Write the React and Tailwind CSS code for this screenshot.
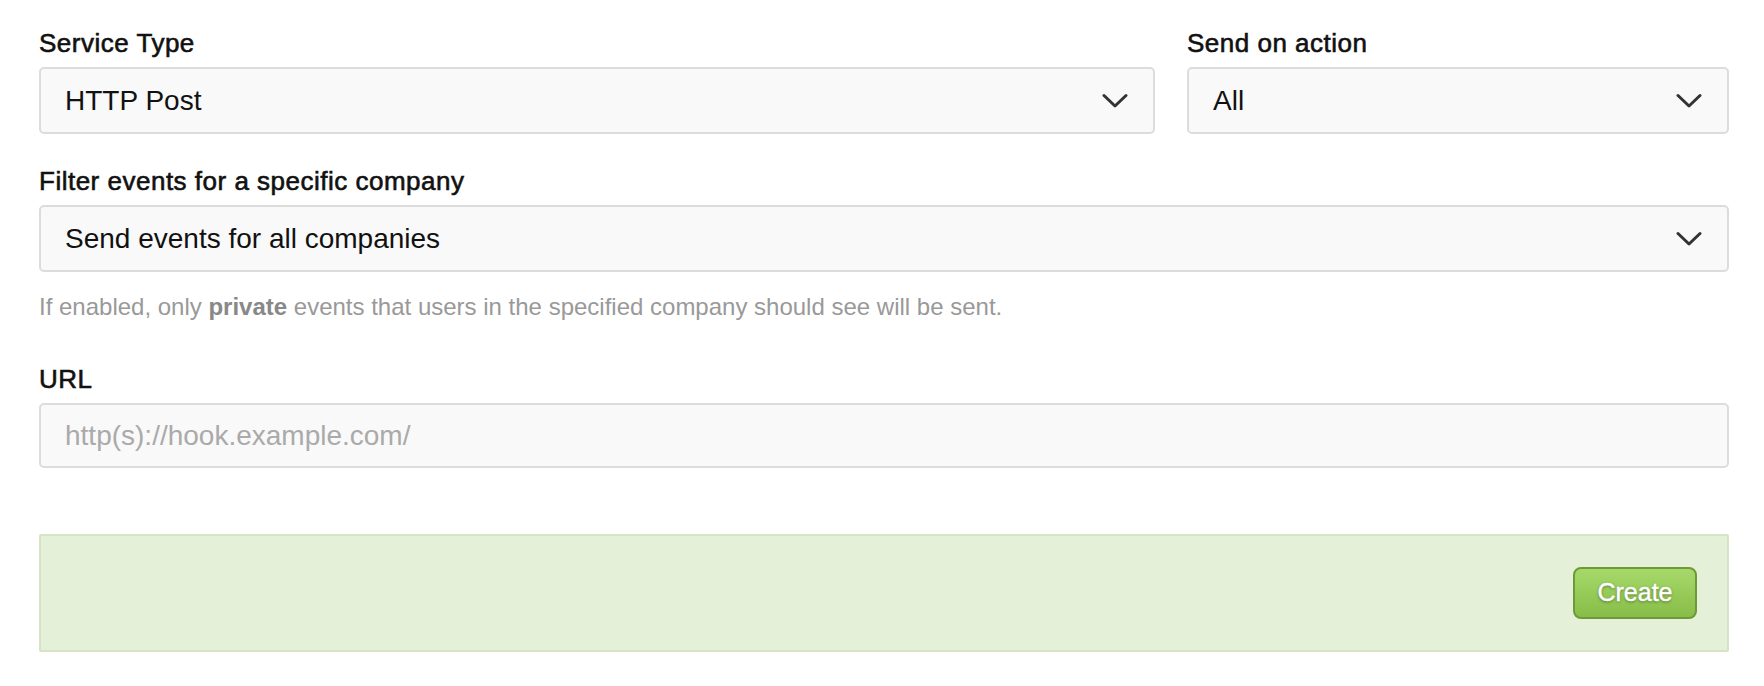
const font = { fontFamily: '"Liberation Sans", Arial, sans-serif' };

function Label({ children }) {
  return (
    <label className="block text-[26px] tracking-[0.5px] leading-[28px] text-[#111] mb-[10px] [-webkit-text-stroke:0.6px_#111]">
      {children}
    </label>
  );
}

function Select({ value }) {
  return (
    <div className="flex h-[67px] items-center justify-between rounded-[5px] border-2 border-[#dcdcdc] bg-[#f9f9f9] pl-[24px] pr-[25px]">
      <span className="text-[28px] text-[#111]">{value}</span>
      <svg width="26" height="16" viewBox="0 0 26 16" fill="none">
        <path d="M2 2.5 L13 13 L24 2.5" stroke="#333" strokeWidth="3" strokeLinecap="round" strokeLinejoin="round" />
      </svg>
    </div>
  );
}

export default function App() {
  return (
    <div className="bg-white min-h-[686px] px-[39px] pr-[35px] pt-[29px]" style={font}>
      <div className="flex gap-[32px]">
        <div className="w-[1116px]">
          <Label>Service Type</Label>
          <Select value="HTTP Post" />
        </div>
        <div className="flex-1">
          <Label>Send on action</Label>
          <Select value="All" />
        </div>
      </div>

      <div className="mt-[33px]">
        <Label>Filter events for a specific company</Label>
        <Select value="Send events for all companies" />
        <p className="mt-[21px] text-[24px] leading-[28px] text-[#999]">
          If enabled, only <span className="font-bold text-[#888]">private</span> events that users in the specified company should see will be sent.
        </p>
      </div>

      <div className="mt-[44px]">
        <Label>URL</Label>
        <input
          placeholder="http(s)://hook.example.com/"
          className="block h-[65px] w-full rounded-[5px] border-2 border-[#dcdcdc] bg-[#f9f9f9] px-[24px] text-[28px] text-[#111] placeholder:text-[#aaa] outline-none"
        />
      </div>

      <div className="mt-[66px] flex h-[118px] items-center justify-end rounded-[2px] border-2 border-[#d5e5c4] bg-[#e5f0d9] pr-[30px]">
        <button className="h-[52px] w-[124px] rounded-[8px] border-2 border-[#6d9a36] bg-gradient-to-b from-[#a6d96a] to-[#87bd47] text-[25px] text-white [-webkit-text-stroke:0.4px_#fff] [text-shadow:0_1px_3px_rgba(0,0,0,0.45)]">
          Create
        </button>
      </div>
    </div>
  );
}
